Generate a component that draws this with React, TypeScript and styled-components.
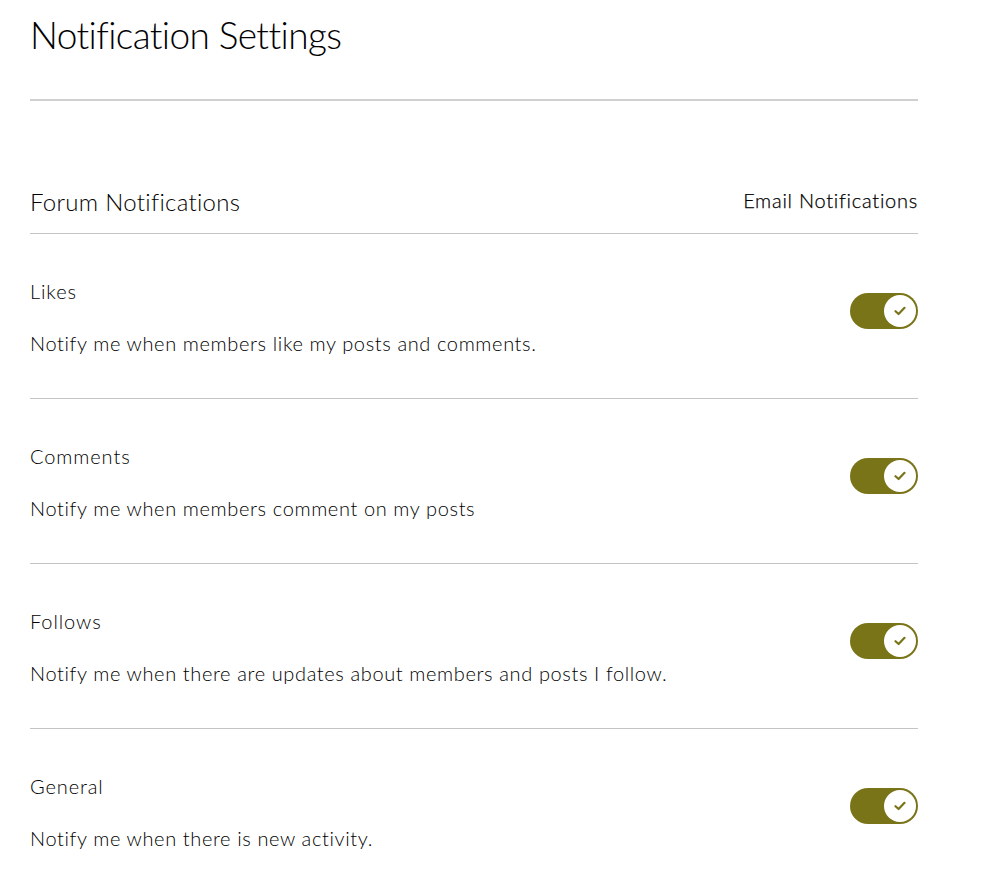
import React from 'react';
import styled, { createGlobalStyle } from 'styled-components';

interface INotification {
  title: string;
  description: string;
}

const notifications: INotification[] = [
  { title: 'Likes', description: 'Notify me when members like my posts and comments.' },
  { title: 'Comments', description: 'Notify me when members comment on my posts' },
  { title: 'Follows', description: 'Notify me when there are updates about members and posts I follow.' },
  { title: 'General', description: 'Notify me when there is new activity.' },
];

const olive = '#7a7419';

const GlobalStyle = createGlobalStyle`
  body {
    margin: 0;
    background: #fff;
    color: #000;
    font-family: Lato, "Open Sans", sans-serif;
    font-weight: 300;
  }
`;

const Page = styled.main`
  width: 888px;
  margin-left: 30px;
`;

const Title = styled.h1`
  margin: 0;
  padding-top: 11px;
  height: 88px;
  font-size: 37px;
  font-weight: 300;
  line-height: 48px;
  letter-spacing: -0.6px;
  border-bottom: 2px solid #d0d0d0;
`;

const SectionHeader = styled.div`
  display: flex;
  justify-content: space-between;
  align-items: center;
  margin-top: 85px;
  height: 48px;
  padding-bottom: 15px;
  box-sizing: border-box;
  border-bottom: 1px solid #c4c4c4;
  h2 {
    margin: 0;
    font-size: 24px;
    font-weight: 300;
    letter-spacing: 0.3px;
    line-height: 30px;
  }
  span {
    font-size: 20px;
    font-weight: 300;
    letter-spacing: 0.75px;
    line-height: 30px;
    margin-top: -4px;
    -webkit-text-stroke: 0.25px #000;
  }
`;

const Row = styled.div`
  display: flex;
  justify-content: space-between;
  align-items: center;
  height: 164px;
  border-bottom: 1px solid #c4c4c4;
  &:last-child {
    border-bottom: none;
  }
`;

const Text = styled.div`
  display: flex;
  flex-direction: column;
  gap: 28px;
  padding-top: 2px;
  h3 {
    margin: 0;
    font-size: 20px;
    font-weight: 300;
    line-height: 24px;
    letter-spacing: 0.9px;
  }
  p {
    margin: 0;
    font-size: 20px;
    font-weight: 300;
    line-height: 24px;
    letter-spacing: 0.62px;
  }
`;

const Toggle = styled.button<{ $on: boolean }>`
  position: relative;
  width: 68px;
  height: 36px;
  margin-top: -10px;
  padding: 0;
  border: none;
  border-radius: 18px;
  background: ${({ $on }) => ($on ? olive : '#ccc')};
  cursor: pointer;
`;

const Knob = styled.span`
  position: absolute;
  top: 2px;
  right: 2px;
  width: 32px;
  height: 32px;
  border-radius: 50%;
  background: #fff;
  display: flex;
  align-items: center;
  justify-content: center;
`;

const Check = () => (
  <svg width="12" height="10" viewBox="0 0 12 10">
    <path d="M1.5 5.2 L4.6 8 L10.5 1.8" fill="none" stroke={olive} strokeWidth="2.2" strokeLinecap="round" strokeLinejoin="round" />
  </svg>
);

const App: React.FC = () => (
  <>
    <GlobalStyle />
    <Page>
      <Title>Notification Settings</Title>
      <SectionHeader>
        <h2>Forum Notifications</h2>
        <span>Email Notifications</span>
      </SectionHeader>
      {notifications.map((n) => (
        <Row key={n.title}>
          <Text>
            <h3>{n.title}</h3>
            <p>{n.description}</p>
          </Text>
          <Toggle $on aria-label={n.title}>
            <Knob>
              <Check />
            </Knob>
          </Toggle>
        </Row>
      ))}
    </Page>
  </>
);

export default App;
